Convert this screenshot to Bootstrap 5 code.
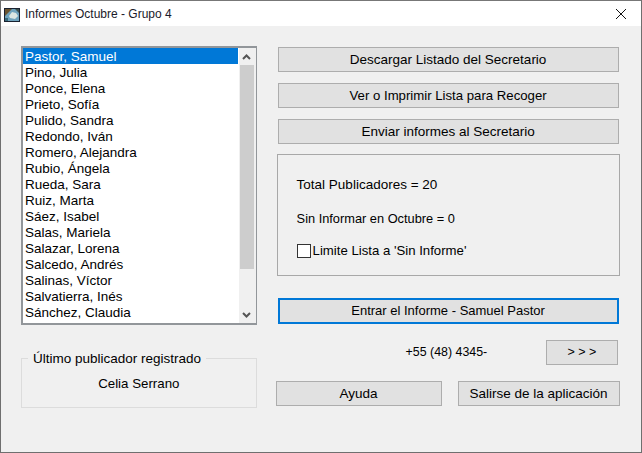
<!DOCTYPE html>
<html lang="es">
<head>
<meta charset="utf-8">
<title>Informes Octubre - Grupo 4</title>
<link rel="stylesheet" href="https://cdn.jsdelivr.net/npm/bootstrap@5.3.0/dist/css/bootstrap.min.css">
<style>
html,body{margin:0;height:453px;overflow:hidden;background:#f0f0f0}
body{font-family:"Liberation Sans",Arial,sans-serif;font-size:13.5px;line-height:16px;color:#000}
.wf{width:642px;height:453px;border:1px solid #6f6f6f;border-top-color:#777;background:#f0f0f0}
.wt{height:25px;background:#fff;padding-left:3px;font-size:12px;color:#1a1a2a;gap:5px}
.wt svg{flex:none}
.wi{margin-top:3px}
.wx{margin-left:auto;margin-right:14px}
.wb{padding:20px 21px 0 20px;gap:20px}
.lc{width:236px}
.lb{height:279px;border:2px solid #92969a;border-right-width:1px;background:#fff;overflow:hidden}
.ls{width:215px;list-style:none;margin:0;padding:0}
.ls li{height:16px;padding-left:2px;line-height:17px;white-space:nowrap}
.ls li.on{background:#0078d7;color:#fff}
.sb{width:17px;margin-left:auto;background:#f0f0f0;height:100%;padding:0 2px 0 1px}
.sa{height:17px}
.st{height:204px;background:#cdcdcd}
.gb{position:relative;height:50px;margin-top:33px;border:1px solid #dcdcdc;text-align:center;padding-top:17px;font-size:13.3px}
.gl{position:absolute;left:6px;top:-8px;background:#f0f0f0;padding:0 5px;white-space:nowrap;font-size:13.5px}
.rc{width:344px;padding-top:1px}
.wbtn{display:block;height:25px;padding:0;border:1px solid #adadad;border-radius:0;background:#e1e1e1;color:#000;font-size:13.5px;line-height:22px;text-align:center}
.wbtn:hover{background:#e1e1e1;border-color:#adadad;color:#000}
.w340{width:341px;margin-left:1px}
.mb11{margin-bottom:11px}
.wbtn.tv{font-size:13.2px}
.fb{height:122px;margin-top:10px;border:1px solid #a8a8a8;padding:22px 0 0 19px}
.fb p{margin:0 0 18px}
.fb p.sn{font-size:12.8px}
.cl{margin-top:-2px;font-size:13.2px}
.cbx{width:14px;height:14px;border:1px solid #333;background:#fff;margin-right:2px;flex:none}
.wbtn.ent{height:26px;margin-top:22px;border:2px solid #0078d7;line-height:20px;font-size:13px}
.pr{margin-top:16px;height:24px;align-items:center}
.ph{margin-left:129px;width:140px;font-size:12.4px}
.wbtn.arw{width:72px;margin-left:auto;margin-right:2px;font-size:12.5px}
.br{margin-top:17px;margin-left:-1px}
.ay{width:166px}
.sl{width:162px;margin-left:16px}
</style>
</head>
<body>
<div class="wf d-flex flex-column">
  <div class="wt d-flex align-items-center">
    <svg class="wi" width="16" height="14" viewBox="0 0 16 14"><rect width="16" height="14" fill="#1a2230"/><rect x="1" y="1" width="14" height="12" fill="#6fa3bd"/><path d="M1 1h7L5 4 1 8z" fill="#6a5430"/><path d="M5 8l3-4 4 1 2 3-3 3-5-1z" fill="#dbe6e2"/><path d="M11 1h4v4z" fill="#3d4f4a"/><path d="M1 10h3v3H1z" fill="#3a6a7a"/></svg>
    <span>Informes Octubre - Grupo 4</span>
    <svg class="wx" width="12" height="12" viewBox="0 0 12 12"><path d="M1 1l10 10M11 1L1 11" stroke="#111" stroke-width="1" fill="none"/></svg>
  </div>
  <div class="wb d-flex">
    <div class="lc">
      <div class="lb d-flex">
        <ul class="ls">
          <li class="on">Pastor, Samuel</li>
          <li>Pino, Julia</li>
          <li>Ponce, Elena</li>
          <li>Prieto, Sofía</li>
          <li>Pulido, Sandra</li>
          <li>Redondo, Iván</li>
          <li>Romero, Alejandra</li>
          <li>Rubio, Ángela</li>
          <li>Rueda, Sara</li>
          <li>Ruiz, Marta</li>
          <li>Sáez, Isabel</li>
          <li>Salas, Mariela</li>
          <li>Salazar, Lorena</li>
          <li>Salcedo, Andrés</li>
          <li>Salinas, Víctor</li>
          <li>Salvatierra, Inés</li>
          <li>Sánchez, Claudia</li>
        </ul>
        <div class="sb d-flex flex-column">
          <div class="sa d-flex align-items-center justify-content-center"><svg width="9" height="6" viewBox="0 0 9 6"><path d="M1 5l3.500-3.500L8 5" stroke="#555" stroke-width="2" fill="none"/></svg></div>
          <div class="st"></div>
          <div class="sa mt-auto d-flex align-items-center justify-content-center"><svg width="9" height="6" viewBox="0 0 9 6"><path d="M1 1l3.500 3.500L8 1" stroke="#555" stroke-width="2" fill="none"/></svg></div>
        </div>
      </div>
      <div class="gb">
        <span class="gl">Último publicador registrado</span>
        Celia Serrano
      </div>
    </div>
    <div class="rc">
      <button type="button" class="btn wbtn w340 mb11">Descargar Listado del Secretario</button>
      <button type="button" class="btn wbtn w340 mb11 tv">Ver o Imprimir Lista para Recoger</button>
      <button type="button" class="btn wbtn w340">Enviar informes al Secretario</button>
      <div class="fb">
        <p>Total Publicadores = 20</p>
        <p class="sn">Sin Informar en Octubre = 0</p>
        <div class="cl d-flex align-items-center"><span class="cbx"></span><span>Limite Lista a 'Sin Informe'</span></div>
      </div>
      <button type="button" class="btn wbtn w340 ent">Entrar el Informe - Samuel Pastor</button>
      <div class="pr d-flex">
        <span class="ph">+55 (48) 4345-</span>
        <button type="button" class="btn wbtn arw">&gt; &gt; &gt;</button>
      </div>
      <div class="br d-flex">
        <button type="button" class="btn wbtn ay">Ayuda</button>
        <button type="button" class="btn wbtn sl">Salirse de la aplicación</button>
      </div>
    </div>
  </div>
</div>
</body>
</html>
